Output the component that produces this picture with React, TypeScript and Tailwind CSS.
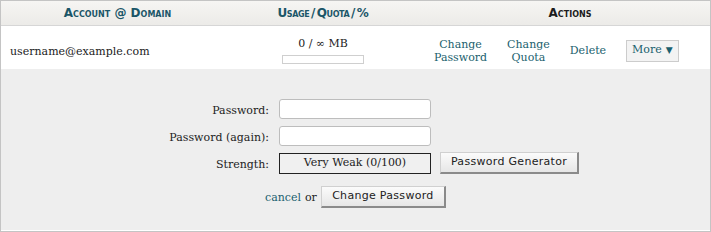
const SERIF = 'font-["DejaVu_Serif",serif]';

function ActionLink({ children }: { children: React.ReactNode }) {
  return (
    <a href="#" className="text-center leading-[13px] text-[#1a5f6e] hover:underline">
      {children}
    </a>
  );
}

function Button({ children, className = '' }: { children: React.ReactNode; className?: string }) {
  return (
    <button
      type="button"
      className={`h-[22px] whitespace-nowrap border border-[#d0d0d0] border-r-2 border-b-2 border-r-[#8a8a8a] border-b-[#8a8a8a] bg-gradient-to-b from-[#fbfbfb] to-[#e6e6e6] text-center font-["DejaVu_Sans",sans-serif] text-[11px] tracking-[0.3px] text-[#222] ${className}`}
    >
      {children}
    </button>
  );
}

export default function App() {
  return (
    <div className={`h-[232px] w-[711px] border border-[#c4c4c4] bg-white ${SERIF} text-[11px] text-[#222]`}>
      {/* Header */}
      <div className="flex h-[25px] items-center border-b border-[#d6d6d6] bg-gradient-to-b from-[#f6f5f3] to-[#ecebe8] font-['DejaVu_Sans',sans-serif] text-[12px] font-bold text-[#1b5668] [font-variant:small-caps]">
        <div className="w-[233px] text-center">Account @ Domain</div>
        <div className="w-[178px] text-center tracking-[-0.4px] [word-spacing:-2px]">Usage / Quota / %</div>
        <div className="flex-1 pl-[18px] text-center text-[#1c1c1c]">Actions</div>
      </div>

      {/* Row */}
      <div className="flex h-[43px] items-center pt-[6px]">
        <div className="w-[233px] pl-[9px] pt-[3px]">username@example.com</div>
        <div className="flex w-[178px] flex-col items-center">
          <span className="leading-[13px]">0 / ∞ MB</span>
          <div className="mt-[5px] h-[9px] w-[82px] border border-[#cfcfcf] bg-white" />
        </div>
        <div className="flex flex-1 items-center gap-[20px] pl-[22px]">
          <ActionLink>
            Change
            <br />
            Password
          </ActionLink>
          <ActionLink>
            Change
            <br />
            Quota
          </ActionLink>
          <ActionLink>Delete</ActionLink>
          <button
            type="button"
            className="flex h-[22px] items-center gap-[4px] border border-[#cccccc] bg-[#f3f3f3] px-[5px] text-[11px] text-[#1a5f6e]"
          >
            More
            <span className="text-[9px]">▼</span>
          </button>
        </div>
      </div>

      {/* Expanded form */}
      <div className="h-[161px] bg-[#eeeeee] pt-[30px]">
        <div className="grid grid-cols-[268px_152px_auto] items-center gap-x-[10px] gap-y-[6px]">
          <span className="pt-[4px] text-right">Password:</span>
          <input className="h-[20px] rounded-[3px] border border-[#bdbdbd] bg-white" />
          <span />
          <span className="pt-[4px] text-right">Password (again):</span>
          <input className="h-[20px] rounded-[3px] border border-[#bdbdbd] bg-white" />
          <span />
          <span className="pt-[4px] text-right">Strength:</span>
          <div className="flex h-[21px] items-center justify-center border border-[#222] bg-[#f0f0f0]">
            Very Weak (0/100)
          </div>
          <Button className="-ml-[1px] w-[139px]">Password Generator</Button>
        </div>
        <div className="mt-[12px] flex items-center gap-[4px] pl-[264px]">
          <a href="#" className="pt-[2px] text-[#1a5f6e]">cancel</a>
          <span className="pt-[2px]">or</span>
          <Button className="w-[125px]">Change Password</Button>
        </div>
      </div>
    </div>
  );
}
